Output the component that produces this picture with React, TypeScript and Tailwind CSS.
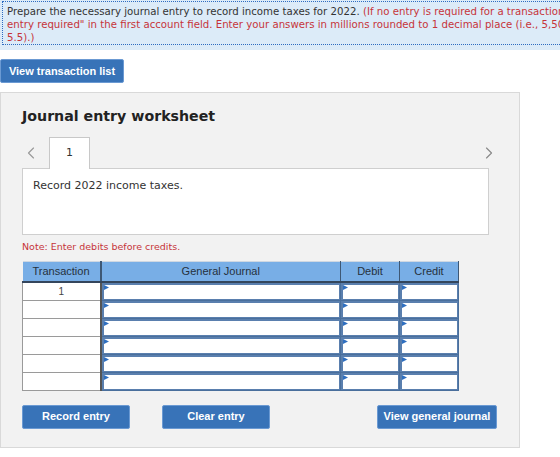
import { ChevronLeft, ChevronRight } from 'lucide-react'

const rows = [0, 1, 2, 3, 4, 5]

// Blue flag marker drawn in the top-left corner of each entry field
function Flag() {
  return (
    <svg width="5" height="5" viewBox="0 0 5 5" className="absolute left-0 top-0">
      <path d="M0 0 L5 2.5 L0 5 Z" fill="#2f6fc0" />
    </svg>
  )
}

function EntryCell() {
  return (
    <td className="p-0 border border-[#4a6f9c]">
      <div className="relative h-[17px] border-t-2 border-l-2 border-r border-b border-[#5a7fae] bg-white">
        <Flag />
      </div>
    </td>
  )
}

function BlueButton({ label, w }: { label: string; w: string }) {
  return (
    <button
      className={`${w} shrink-0 h-[24px] rounded-[2px] bg-[#3873b8] border border-[#6b9ad3] text-white text-[11px] font-bold leading-none`}
      style={{ fontFamily: '"Liberation Sans", Arial, sans-serif' }}
    >
      {label}
    </button>
  )
}

export default function App() {
  return (
    <div className="w-[560px] h-[457px] overflow-hidden bg-white font-['DejaVu_Sans',Verdana,sans-serif] text-[#333]">
      {/* Instructions */}
      <div className="bg-[#dcebf8] pt-px pl-[2px] pb-[5px]">
        <div className="w-[716px] border border-dotted border-[#2f6cc0] pl-[4px] pt-[3px] text-[10.2px] leading-[13px]">
          Prepare the necessary journal entry to record income taxes for 2022.{' '}
          <span className="text-[#c6343a]">
            (If no entry is required for a transaction/event, select "No journal entry required" in the first account field. Enter your answers in millions rounded to 1 decimal place (i.e., 5,500,000 should be entered as 5.5).)
          </span>
        </div>
      </div>

      <div className="mt-[9px] flex">
        <BlueButton label="View transaction list" w="w-[124px]" />
      </div>

      {/* Worksheet panel */}
      <div className="mt-[9px] w-[520px] border border-[#d9d9d9] bg-[#f2f2f2] pl-[21px] pr-[30px] pt-[13px] pb-[18px]">
        <h2 className="text-[14.2px] font-bold leading-[20px] text-[#222]">Journal entry worksheet</h2>

        <div className="mt-[11px] flex items-end h-[31px] w-[467px]">
          <div className="w-[27px] h-full flex items-center">
            <ChevronLeft size={20} strokeWidth={1.4} className="text-[#9a9a9a] -ml-[1px]" />
          </div>
          <div className="relative z-10 -mb-px w-[41px] h-[32px] bg-white border border-b-0 border-[#c8c8c8] flex items-center justify-center text-[11px] text-[#333]">
            1
          </div>
          <div className="flex-1" />
          <div className="h-full flex items-center -mr-[10px]">
            <ChevronRight size={20} strokeWidth={1.4} className="text-[#8a8a8a]" />
          </div>
        </div>

        <div className="w-[467px] h-[67px] bg-white border border-[#cfcfcf] pl-[10px] pt-[10px] text-[11px] leading-[14px]">
          Record 2022 income taxes.
        </div>

        <p className="mt-[5px] text-[9.5px] leading-[13px] text-[#c6343a]">Note: Enter debits before credits.</p>

        <table
          className="mt-[8px] w-[436px] border-collapse table-fixed"
          style={{ fontFamily: '"Liberation Sans", Arial, sans-serif' }}
        >
          <colgroup>
            <col className="w-[78px]" />
            <col className="w-[240px]" />
            <col className="w-[59px]" />
            <col className="w-[59px]" />
          </colgroup>
          <thead>
            <tr className="h-[20px] bg-[#78aee6] text-[11px] text-[#26313d]">
              <th className="p-0 font-normal border-t border-t-[#cfd8e2] border-b-2 border-b-[#34465c] border-r-2 border-r-[#3e5875]">Transaction</th>
              <th className="p-0 font-normal border-t border-t-[#cfd8e2] border-b-2 border-b-[#34465c] border-r border-r-[#3e5875]">General Journal</th>
              <th className="p-0 font-normal border-t border-t-[#cfd8e2] border-b-2 border-b-[#34465c] border-r border-r-[#3e5875]">Debit</th>
              <th className="p-0 font-normal border-t border-t-[#cfd8e2] border-b-2 border-b-[#34465c] border-r border-r-[#3e5875]">Credit</th>
            </tr>
          </thead>
          <tbody>
            {rows.map((r) => (
              <tr key={r}>
                <td className="p-0 h-[17px] bg-white border border-[#9a9a9a] border-r-2 border-r-[#555] text-center text-[10px] text-[#444]">
                  {r === 0 ? '1' : ''}
                </td>
                <EntryCell />
                <EntryCell />
                <EntryCell />
              </tr>
            ))}
          </tbody>
        </table>

        <div className="mt-[14px] flex items-center">
          <BlueButton label="Record entry" w="w-[108px]" />
          <div className="ml-[32px] flex">
            <BlueButton label="Clear entry" w="w-[108px]" />
          </div>
          <div className="ml-[107px] flex">
            <BlueButton label="View general journal" w="w-[120px]" />
          </div>
        </div>
      </div>
    </div>
  )
}
